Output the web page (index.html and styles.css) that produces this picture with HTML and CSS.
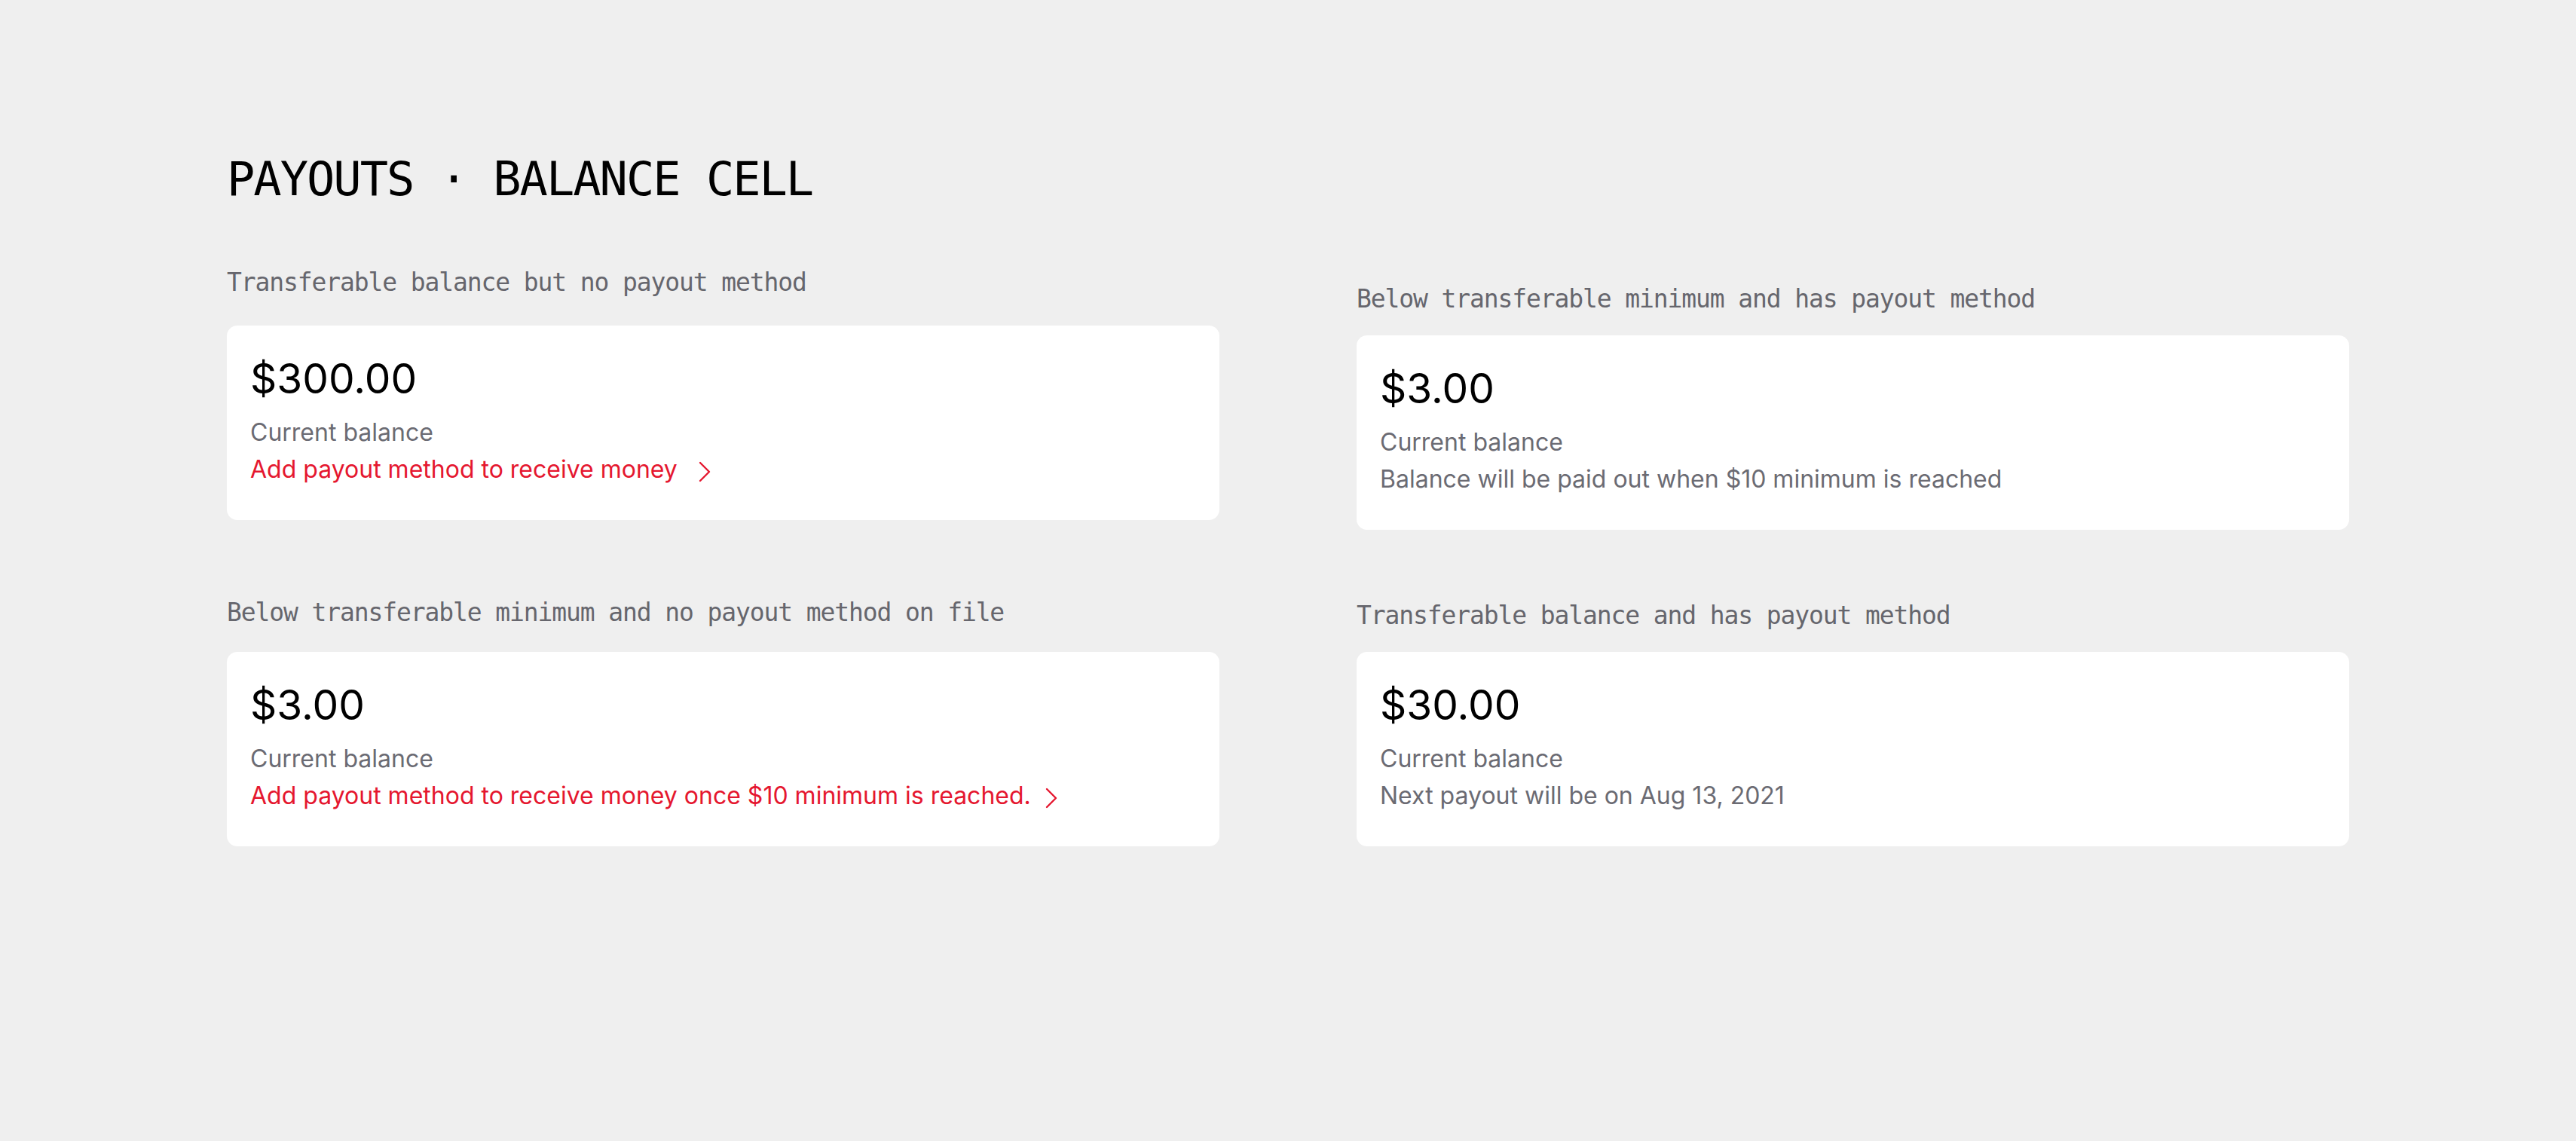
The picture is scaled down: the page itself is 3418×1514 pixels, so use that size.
FILE: index.html
```html
<!DOCTYPE html>
<html lang="en">
<head>
<meta charset="utf-8">
<title>Payouts · Balance cell</title>
<link rel="stylesheet" href="styles.css">
</head>
<body>
<main class="page">
  <h1 class="page-title">PAYOUTS · BALANCE CELL</h1>
  <section class="grid">
    <div class="case case--a">
      <p class="case-label">Transferable balance but no payout method</p>
      <div class="card">
        <div class="amount">$300.00</div>
        <div class="caption">Current balance</div>
        <a class="action" href="#">Add payout method to receive money <svg class="chevron" viewBox="0 0 16 28" width="16" height="28"><polyline points="2,2 14,14 2,26"/></svg></a>
      </div>
    </div>
    <div class="case case--b">
      <p class="case-label">Below transferable minimum and has payout method</p>
      <div class="card">
        <div class="amount">$3.00</div>
        <div class="caption">Current balance</div>
        <div class="caption">Balance will be paid out when $10 minimum is reached</div>
      </div>
    </div>
    <div class="case case--c">
      <p class="case-label">Below transferable minimum and no payout method on file</p>
      <div class="card">
        <div class="amount">$3.00</div>
        <div class="caption">Current balance</div>
        <a class="action" href="#">Add payout method to receive money once $10 minimum is reached.<svg class="chevron" viewBox="0 0 16 28" width="16" height="28"><polyline points="2,2 14,14 2,26"/></svg></a>
      </div>
    </div>
    <div class="case case--d">
      <p class="case-label">Transferable balance and has payout method</p>
      <div class="card">
        <div class="amount">$30.00</div>
        <div class="caption">Current balance</div>
        <div class="caption">Next payout will be on Aug 13, 2021</div>
      </div>
    </div>
  </section>
</main>
</body>
</html>
```

FILE: styles.css
```css
html, body {
  margin: 0;
  padding: 0;
  background: #efefef;
}

.page {
  padding: 202px 0 0 301px;
  min-height: 1514px;
  box-sizing: border-box;
}

.page-title {
  margin: 0 0 81px;
  font-family: "DejaVu Sans Mono", "Liberation Mono", monospace;
  font-weight: 400;
  font-size: 62px;
  line-height: 72px;
  letter-spacing: -2px;
  color: #000;
}

.grid {
  display: grid;
  grid-template-columns: 1317px 1317px;
  column-gap: 182px;
  row-gap: 90px;
}

.case {
  display: flex;
  flex-direction: column;
}

.case-label {
  margin: 0 0 32px;
  font-family: "DejaVu Sans Mono", "Liberation Mono", monospace;
  font-size: 33px;
  line-height: 40px;
  letter-spacing: -1.12px;
  color: #66666d;
}

.case--a .case-label { margin-bottom: 37px; }
.case--b { padding-top: 22px; }
.case--b .case-label { margin-bottom: 28px; }
.case--d { padding-top: 4px; }
.case--d .case-label { margin-bottom: 28px; }

.card {
  background: #fff;
  border-radius: 14px;
  padding: 38px 31px 42px;
  height: 258px;
  box-sizing: border-box;
  font-family: Inter, "Noto Sans", sans-serif;
}

.amount {
  font-size: 55px;
  line-height: 64px;
  color: #000;
  margin-bottom: 15px;
}

.caption,
.action {
  display: block;
  font-size: 32px;
  line-height: 49px;
  color: #6b6b73;
  text-decoration: none;
}

.action {
  color: #e5172f;
}

.chevron {
  vertical-align: -6px;
  margin-left: 19px;
  fill: none;
  stroke: #e5172f;
  stroke-width: 2.4;
  stroke-linecap: round;
  stroke-linejoin: round;
}
```
